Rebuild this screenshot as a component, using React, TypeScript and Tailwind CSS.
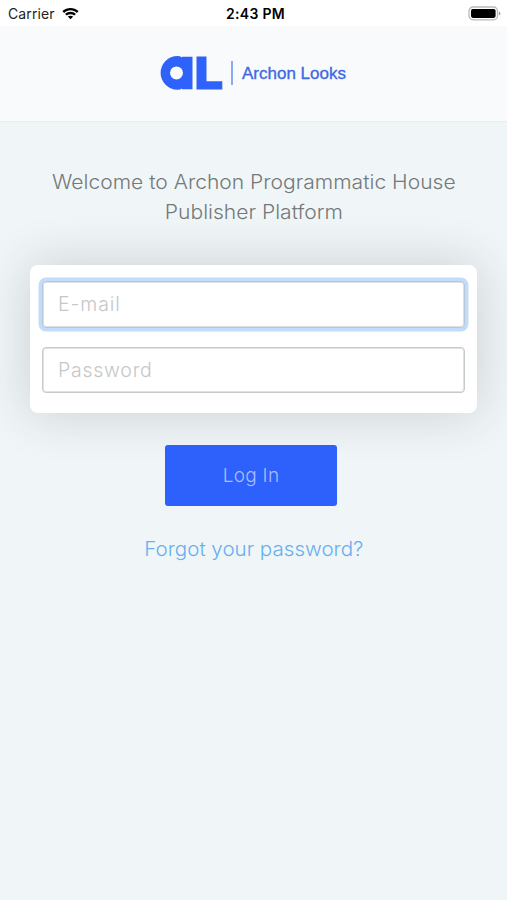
function WifiIcon() {
  return (
    <svg className="h-[13px] w-[17px]" viewBox="0 0 17 13">
      <path d="M.4 4.1C5-.2 12-.2 16.600 4.100L14.900 5.900C11.200 2.500 5.800 2.500 2.100 5.900Z" />
      <path d="M3.100 6.900C6.200 4.100 10.800 4.100 13.900 6.900L12.200 8.600C10 6.800 7 6.800 4.800 8.600Z" />
      <path d="M5.800 9.600C7.400 8.300 9.600 8.300 11.200 9.600L8.500 12.300Z" />
    </svg>
  );
}

function BatteryIcon() {
  return (
    <svg className="h-[15px] w-[33px]" viewBox="0 0 33 15">
      <rect x="1" y="1" width="28.500" height="12.800" rx="4" fill="#fff" stroke="#b9b9b9" strokeWidth="1.300" />
      <rect x="3" y="3" width="24.600" height="8.900" rx="1.800" fill="#000" />
      <path d="M30.900 5.500q1.500.6 1.500 2t-1.500 2z" fill="#999" />
    </svg>
  );
}

function Logo() {
  return (
    <svg className="h-[34px] w-[63px]" viewBox="0 0 63 34" fill="#2f62fb">
      <path
        fillRule="evenodd"
        d="M17.500 0Q20 0 22 1.400V.8H32.500V33.300H22V32.400Q20 33.800 17.500 33.800A16.900 16.900 0 0 1 17.500 0ZM16.500 10.400A6.500 6.500 0 1 0 16.500 23.400A6.500 6.500 0 1 0 16.500 10.400Z"
      />
      <path d="M36.500.6H46.500V25.200H62.300V33.500H36.500Z" />
    </svg>
  );
}

export default function App() {
  return (
    <div className="flex h-[900px] w-[507px] flex-col overflow-hidden bg-[#f0f6f7] font-['Inter',sans-serif]">
      <div className="grid h-[26px] shrink-0 grid-cols-3 items-center bg-white text-black">
        <div className="flex items-center gap-[7px] pl-[8px]">
          <span className="pt-px text-[14px] leading-[26px] tracking-[0.1px] text-[#222]">Carrier</span>
          <WifiIcon />
        </div>
        <div className="whitespace-nowrap pl-[4px] text-center text-[14px] font-semibold tracking-[0.300px]">2:43 PM</div>
        <div className="flex justify-end pr-[6px]">
          <BatteryIcon />
        </div>
      </div>

      <header className="flex h-24 shrink-0 border-b border-[#e9eeef] bg-[#f8fafc] pt-[30px] pl-[160px]">
        <div className="flex h-[34px] items-center">
          <Logo />
          <div className="ml-[8px] h-6 w-[2px] bg-[#8ba8f6]" />
          <span className="ml-[9px] whitespace-nowrap pt-px font-['Liberation_Sans',Arial,sans-serif] text-[17px] text-[#3f68e5] [-webkit-text-stroke:0.350px_#3f68e5]">
            Archon Looks
          </span>
        </div>
      </header>

      <main className="flex flex-col items-center">
        <h1 className="mt-[46px] scale-x-[1.080] whitespace-nowrap text-center text-[19.500px] leading-[29.500px] font-light text-[#74797b]">
          Welcome to Archon Programmatic House
          <br />
          Publisher Platform
        </h1>

        <form className="mt-[38px] flex h-[148px] w-[447px] flex-col gap-[19px] rounded-[8px] bg-white px-3 pt-4 shadow-[0_0_50px_rgba(45,45,70,0.200)]">
          <input
            type="email"
            placeholder="E-mail"
            className="h-[47px] w-full shrink-0 rounded-[4px] border border-[#b9c6d6] bg-white px-[15px] pb-px text-[19.500px] font-light tracking-[0.900px] shadow-[0_0_0_3.500px_#c1ddfa,inset_0_0_0_1px_#dcdfe4] outline-none placeholder:text-[#c5c7ca]"
          />
          <input
            type="password"
            placeholder="Password"
            className="h-[46px] w-full shrink-0 rounded-[4px] border border-[#c8c9cb] bg-white px-[15px] text-[19.500px] font-light tracking-[0.750px] shadow-[inset_0_0_0_1px_#e2e2e4] outline-none placeholder:text-[#c5c7ca]"
          />
        </form>

        <button className="mt-8 mr-[5px] h-[61px] w-[172px] rounded-[3px] bg-[#2e60fb] pt-px text-[19px] font-light tracking-[0.300px] text-[#a9beff]">
          Log In
        </button>
        <a className="mt-[29px] scale-x-[1.055] whitespace-nowrap text-[19.500px] leading-[29px] font-light text-[#68aff0]">
          Forgot your password?
        </a>
      </main>
    </div>
  );
}
